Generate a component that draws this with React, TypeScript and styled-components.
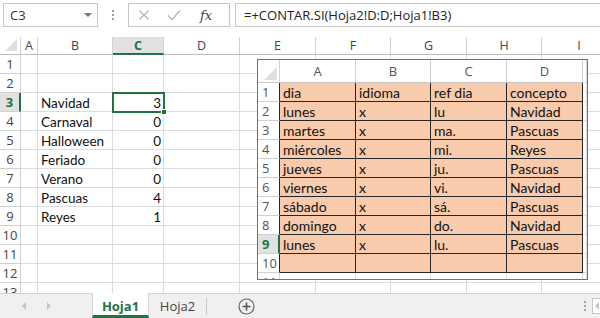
import React from 'react';
import styled, { createGlobalStyle, css } from 'styled-components';

const Global = createGlobalStyle`
  html, body { margin: 0; padding: 0; background: #fff; }
  body { font-family: "Open Sans", "Liberation Sans", sans-serif; }
  * { box-sizing: border-box; }
`;

const GREEN = '#217346';
const GRID = '#dadcdd';
const HEAD_LINE = '#d0d0d0';

const Frame = styled.div`
  width: 600px;
  height: 318px;
  overflow: hidden;
  display: flex;
  flex-direction: column;
  background: #fff;
`;

/* ---------- formula bar ---------- */
const Toolbar = styled.div`
  height: 37px;
  flex-shrink: 0;
  display: flex;
  align-items: flex-start;
  padding: 3px 0 0 3px;
`;

const NameBox = styled.div`
  width: 95px;
  height: 24px;
  border: 1px solid #c6c6c6;
  display: flex;
  align-items: center;
  justify-content: space-between;
  padding: 0 5px 0 6px;
  font-size: 13px;
  color: #333;
`;

const Caret = styled.span`
  width: 0;
  height: 0;
  border-left: 4px solid transparent;
  border-right: 4px solid transparent;
  border-top: 4px solid #777;
`;

const Grip = styled.div`
  width: 30px;
  height: 24px;
  display: flex;
  flex-direction: column;
  align-items: center;
  justify-content: center;
  gap: 2px;
`;

const Dot = styled.span`
  width: 2px;
  height: 2px;
  background: #a0a0a0;
`;

const FxBox = styled.div`
  width: 102px;
  height: 24px;
  border: 1px solid #c6c6c6;
  display: flex;
  align-items: center;
  padding-left: 9px;
  gap: 17px;
`;

const FxLabel = styled.span`
  font-family: "DejaVu Serif", "Liberation Serif", serif;
  font-style: italic;
  font-size: 13px;
  color: #444;
  margin-left: 2px;
`;

const FormulaBox = styled.div`
  flex: 1;
  height: 24px;
  margin-left: 5px;
  border: 1px solid #c6c6c6;
  border-right: none;
  display: flex;
  align-items: center;
  padding-left: 8px;
  font-size: 13px;
  color: #222;
  white-space: nowrap;
`;

/* ---------- sheet ---------- */
const Sheet = styled.div`
  position: relative;
  flex: 1;
  overflow: hidden;
`;

const Grid = styled.div`
  display: grid;
  grid-template-columns: 21px 17px 75px 51px 76px 76px 75px 76px 75px 75px;
  grid-template-rows: 18px repeat(13, 19px);
`;

const Corner = styled.div`
  position: relative;
  border-right: 1px solid ${HEAD_LINE};
  border-bottom: 1px solid #bdbdbd;
  &::after {
    content: '';
    position: absolute;
    right: 3px;
    bottom: 3px;
    width: 0;
    height: 0;
    border-left: 12px solid transparent;
    border-bottom: 12px solid #dfdfdf;
  }
`;

const ColHeader = styled.div<{ $sel?: boolean }>`
  display: flex;
  align-items: center;
  justify-content: center;
  font-size: 12.5px;
  color: #444;
  border-right: 1px solid ${HEAD_LINE};
  border-bottom: 1px solid #bdbdbd;
  ${(p) =>
    p.$sel &&
    css`
      background: #e1e1e1;
      color: ${GREEN};
      font-weight: 700;
      border-bottom: 2px solid ${GREEN};
    `}
`;

const RowHeader = styled.div<{ $sel?: boolean }>`
  display: flex;
  align-items: center;
  justify-content: center;
  font-size: 13px;
  color: #444;
  border-right: 1px solid ${HEAD_LINE};
  border-bottom: 1px solid ${HEAD_LINE};
  ${(p) =>
    p.$sel &&
    css`
      background: #e1e1e1;
      color: ${GREEN};
      font-weight: 700;
      border-right: 2px solid ${GREEN};
    `}
`;

const Cell = styled.div<{ $right?: boolean; $sel?: boolean }>`
  position: relative;
  display: flex;
  align-items: center;
  justify-content: ${(p) => (p.$right ? 'flex-end' : 'flex-start')};
  padding: 1px 2px 0 3px;
  font-family: "Lato", "Open Sans", sans-serif;
  font-size: 13.5px;
  color: #111;
  white-space: nowrap;
  border-right: 1px solid ${GRID};
  border-bottom: 1px solid ${GRID};
  ${(p) =>
    p.$sel &&
    css`
      outline: 2px solid ${GREEN};
      outline-offset: -1px;
      z-index: 1;
    `}
`;

const FillHandle = styled.span`
  position: absolute;
  right: -4px;
  bottom: -4px;
  width: 6px;
  height: 6px;
  background: ${GREEN};
  border: 1px solid #fff;
`;

/* ---------- pasted picture ---------- */
const Picture = styled.div`
  position: absolute;
  left: 257px;
  top: 22px;
  width: 331px;
  height: 221px;
  border: 1px solid #c0504d;
  background: #fff;
  overflow: hidden;
  z-index: 2;
`;

const InnerGrid = styled.div`
  display: grid;
  grid-template-columns: 22px 76px 75px 76px 76px 1fr;
  grid-template-rows: 23px repeat(11, 19px);
`;

const InnerCorner = styled(Corner)`
  border-bottom: 1px solid #c8c8c8;
  &::after {
    right: 2px;
    bottom: 2px;
    border-left-width: 13px;
    border-bottom-width: 13px;
  }
`;

const InnerColHeader = styled.div`
  display: flex;
  align-items: center;
  justify-content: center;
  font-size: 13px;
  color: #555;
  border-right: 1px solid ${HEAD_LINE};
  border-bottom: 1px solid #c8c8c8;
`;

const InnerRowHeader = styled.div<{ $sel?: boolean; $data?: boolean }>`
  display: flex;
  align-items: center;
  padding-left: 4px;
  font-size: 13px;
  color: #555;
  border-bottom: 1px solid ${HEAD_LINE};
  border-right: 1px solid ${(p) => (p.$data ? '#262626' : HEAD_LINE)};
  ${(p) =>
    p.$sel &&
    css`
      background: #e1e1e1;
      color: ${GREEN};
      font-weight: 700;
      border-right: 2px solid ${GREEN};
    `}
`;

const Peach = styled.div`
  display: flex;
  align-items: center;
  padding: 1px 3px 0 3px;
  background: #f8cbad;
  font-family: "Lato", "Open Sans", sans-serif;
  font-size: 14px;
  color: #111;
  white-space: nowrap;
  border-right: 1px solid #262626;
  border-bottom: 1px solid #262626;
`;

const Blank = styled.div`
  border-right: 1px solid ${GRID};
  border-bottom: 1px solid ${GRID};
`;

/* ---------- tab bar ---------- */
const TabBar = styled.div`
  height: 25px;
  flex-shrink: 0;
  display: flex;
  align-items: stretch;
  background: #f0f0f0;
  border-top: 1px solid #d4d4d4;
`;

const NavArrows = styled.div`
  width: 92px;
  display: flex;
  align-items: center;
  padding-left: 22px;
  gap: 21px;
`;

const Tri = styled.span<{ $dir: 'l' | 'r' }>`
  width: 0;
  height: 0;
  border-top: 4px solid transparent;
  border-bottom: 4px solid transparent;
  ${(p) =>
    p.$dir === 'l'
      ? css`border-right: 4px solid #c4c4c4;`
      : css`border-left: 4px solid #c4c4c4;`}
`;

const Tab = styled.div<{ $active?: boolean }>`
  width: 57px;
  display: flex;
  align-items: center;
  justify-content: center;
  font-size: 13px;
  color: #444;
  margin-top: -1px;
  ${(p) =>
    p.$active &&
    css`
      background: #fff;
      color: ${GREEN};
      font-weight: 700;
      border-bottom: 3px solid ${GREEN};
      border-left: 1px solid #d4d4d4;
      border-right: 1px solid #d4d4d4;
      padding-top: 3px;
    `}
`;

const TabSep = styled.span`
  width: 1px;
  height: 17px;
  align-self: center;
  background: #c8c8c8;
`;

const AddSheet = styled.div`
  margin-left: 31px;
  display: flex;
  align-items: center;
`;

const Spacer = styled.div`
  flex: 1;
`;

const ScrollGrip = styled.div`
  width: 14px;
  display: flex;
  flex-direction: column;
  align-items: center;
  justify-content: center;
  gap: 2px;
`;

const ScrollBtn = styled.div`
  width: 8px;
  margin: 4px 0 4px 0;
  border: 1px solid #c6c6c6;
  border-right: none;
  background: #fff;
  display: flex;
  align-items: center;
  padding-left: 2px;
`;

const sideData: Record<number, [string, string]> = {
  3: ['Navidad', '3'],
  4: ['Carnaval', '0'],
  5: ['Halloween', '0'],
  6: ['Feriado', '0'],
  7: ['Verano', '0'],
  8: ['Pascuas', '4'],
  9: ['Reyes', '1'],
};

const tableRows: string[][] = [
  ['dia', 'idioma', 'ref dia', 'concepto'],
  ['lunes', 'x', 'lu', 'Navidad'],
  ['martes', 'x', 'ma.', 'Pascuas'],
  ['miércoles', 'x', 'mi.', 'Reyes'],
  ['jueves', 'x', 'ju.', 'Pascuas'],
  ['viernes', 'x', 'vi.', 'Navidad'],
  ['sábado', 'x', 'sá.', 'Pascuas'],
  ['domingo', 'x', 'do.', 'Navidad'],
  ['lunes', 'x', 'lu.', 'Pascuas'],
  ['', '', '', ''],
];

const letters = ['A', 'B', 'C', 'D', 'E', 'F', 'G', 'H', 'I'];

export default function App() {
  return (
    <Frame>
      <Global />
      <Toolbar>
        <NameBox>
          <span>C3</span>
          <Caret />
        </NameBox>
        <Grip>
          <Dot />
          <Dot />
          <Dot />
        </Grip>
        <FxBox>
          <svg width="12" height="12" viewBox="0 0 12 12">
            <path d="M1.5 1.5 L10.5 10.5 M10.5 1.5 L1.5 10.5" stroke="#b4b4b4" strokeWidth="1.2" fill="none" />
          </svg>
          <svg width="14" height="12" viewBox="0 0 14 12">
            <path d="M1 6.5 L5 10.5 L13 1.5" stroke="#b4b4b4" strokeWidth="1.3" fill="none" />
          </svg>
          <FxLabel>fx</FxLabel>
        </FxBox>
        <FormulaBox>=+CONTAR.SI(Hoja2!D:D;Hoja1!B3)</FormulaBox>
      </Toolbar>

      <Sheet>
        <Grid>
          <Corner />
          {letters.map((l) => (
            <ColHeader key={l} $sel={l === 'C'}>
              {l}
            </ColHeader>
          ))}
          {Array.from({ length: 13 }, (_, i) => {
            const r = i + 1;
            const d = sideData[r];
            return (
              <React.Fragment key={r}>
                <RowHeader $sel={r === 3}>{r}</RowHeader>
                <Cell />
                <Cell>{d ? d[0] : ''}</Cell>
                <Cell $right $sel={r === 3}>
                  {d ? d[1] : ''}
                  {r === 3 && <FillHandle />}
                </Cell>
                {Array.from({ length: 6 }, (_, j) => (
                  <Cell key={j} />
                ))}
              </React.Fragment>
            );
          })}
        </Grid>

        <Picture>
          <InnerGrid>
            <InnerCorner />
            {['A', 'B', 'C', 'D'].map((l) => (
              <InnerColHeader key={l}>{l}</InnerColHeader>
            ))}
            <Blank />
            {tableRows.map((row, i) => (
              <React.Fragment key={i}>
                <InnerRowHeader $data $sel={i === 8}>
                  {i + 1}
                </InnerRowHeader>
                {row.map((v, j) => (
                  <Peach key={j}>{v}</Peach>
                ))}
                <Blank />
              </React.Fragment>
            ))}
            <InnerRowHeader>11</InnerRowHeader>
            <Blank />
            <Blank />
            <Blank />
            <Blank />
            <Blank />
          </InnerGrid>
        </Picture>
      </Sheet>

      <TabBar>
        <NavArrows>
          <Tri $dir="l" />
          <Tri $dir="r" />
        </NavArrows>
        <Tab $active>Hoja1</Tab>
        <Tab>Hoja2</Tab>
        <TabSep />
        <AddSheet>
          <svg width="17" height="17" viewBox="0 0 17 17">
            <circle cx="8.5" cy="8.5" r="7.5" stroke="#666" strokeWidth="1.2" fill="none" />
            <path d="M8.5 4.5 V12.5 M4.5 8.5 H12.5" stroke="#555" strokeWidth="1.6" />
          </svg>
        </AddSheet>
        <Spacer />
        <ScrollGrip>
          <Dot />
          <Dot />
          <Dot />
        </ScrollGrip>
        <ScrollBtn>
          <Tri $dir="l" />
        </ScrollBtn>
      </TabBar>
    </Frame>
  );
}
